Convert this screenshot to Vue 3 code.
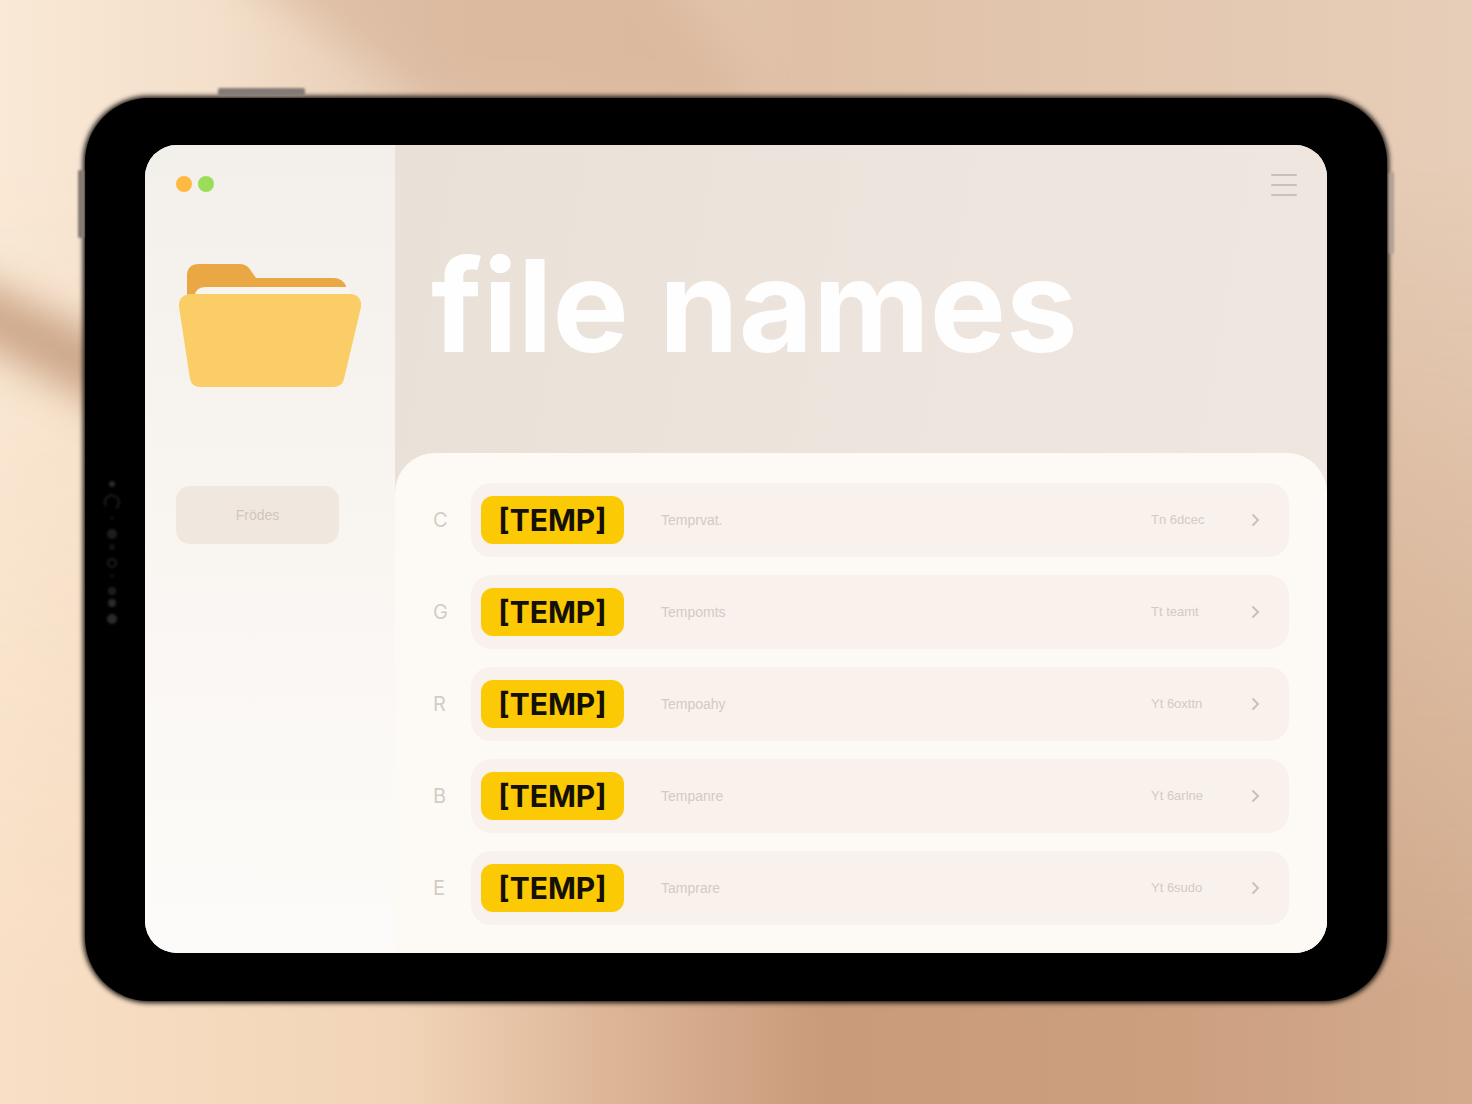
<script setup>
const files = [
  { mark: 'C', tag: '[TEMP]', name: 'Temprvat.', place: 'Tn 6dcec' },
  { mark: 'G', tag: '[TEMP]', name: 'Tempomts', place: 'Tt teamt' },
  { mark: 'R', tag: '[TEMP]', name: 'Tempoahy', place: 'Yt 6oxttn' },
  { mark: 'B', tag: '[TEMP]', name: 'Tempanre', place: 'Yt 6arlne' },
  { mark: 'E', tag: '[TEMP]', name: 'Tamprare', place: 'Yt 6sudo' },
]
</script>

<template>
  <div class="scene">
    <svg class="backdrop" viewBox="0 0 1472 1104" preserveAspectRatio="none" aria-hidden="true">
      <defs>
        <linearGradient id="wall" x1="0" y1="0" x2="1" y2="0">
          <stop offset="0" stop-color="#fae9d6" />
          <stop offset="0.15" stop-color="#f3dfca" />
          <stop offset="0.3" stop-color="#e4c8b1" />
          <stop offset="0.55" stop-color="#e0c1a8" />
          <stop offset="1" stop-color="#e7ceb8" />
        </linearGradient>
        <linearGradient id="floor" x1="0" y1="0" x2="1" y2="0">
          <stop offset="0" stop-color="#f8dfc5" />
          <stop offset="0.27" stop-color="#f2d5b8" />
          <stop offset="0.42" stop-color="#dcb496" />
          <stop offset="0.56" stop-color="#c99b7a" />
          <stop offset="0.8" stop-color="#cc9f7f" />
          <stop offset="1" stop-color="#d2ab8d" />
        </linearGradient>
        <linearGradient id="fade" x1="0" y1="0" x2="0" y2="1">
          <stop offset="0.15" stop-color="#000" />
          <stop offset="0.9" stop-color="#fff" />
        </linearGradient>
        <mask id="low"><rect width="1472" height="1104" fill="url(#fade)" /></mask>
        <filter id="soft" x="-50%" y="-50%" width="200%" height="200%">
          <feGaussianBlur stdDeviation="20" />
        </filter>
      </defs>
      <rect width="1472" height="1104" fill="url(#wall)" />
      <rect width="1472" height="1104" fill="url(#floor)" mask="url(#low)" />
      <path d="M190 -60 L440 110 L760 110 L640 -60Z" fill="#d7b397" opacity="0.6" filter="url(#soft)" />
      <path d="M-60 262 L140 355 L140 425 L-60 322Z" fill="#c09475" opacity="0.8" filter="url(#soft)" />
    </svg>

    <div class="device">
      <span class="key key-top"></span>
      <span class="key key-left"></span>
      <span class="key key-right"></span>
      <svg class="sensors" width="20" height="150" viewBox="0 0 20 150" aria-hidden="true">
        <g fill="#2a2a2a">
          <circle cx="10" cy="8" r="3" />
          <circle cx="10" cy="42" r="2" opacity="0.4" />
          <circle cx="10" cy="58" r="5" opacity="0.7" />
          <circle cx="10" cy="71" r="3" opacity="0.5" />
          <circle cx="10" cy="100" r="2" opacity="0.4" />
          <circle cx="10" cy="115" r="4" opacity="0.7" />
          <circle cx="10" cy="127" r="4" />
          <circle cx="10" cy="143" r="5" />
        </g>
        <g fill="none" stroke="#1c1c1c" stroke-width="2">
          <path d="M4 30 A7 7 0 1 1 14 32" />
          <circle cx="10" cy="87" r="4" />
        </g>
      </svg>

      <div class="screen">
        <aside class="sidebar">
          <div class="lights"><span class="light amber"></span><span class="light green"></span></div>
          <svg class="folder" width="184" height="124" viewBox="0 0 184 124" aria-hidden="true">
            <path d="M9 38 V12 Q9 0 21 0 H62 Q67 0 71 4 L78 14 H156 Q164 14 168 22 V38Z" fill="#e9a844" />
            <path d="M17 38 V31 Q18 23 28 23 H172 V38Z" fill="#f8f5f1" />
            <path d="M11 30 H173 Q184 31 183 43 L166 115 Q164 123 155 123 H22 Q14 123 12 115 L1 43 Q0 32 11 30Z" fill="#fbcd66" />
          </svg>
          <button class="folders" type="button">Frödes</button>
        </aside>

        <main class="main">
          <header class="hero">
            <button class="menu" type="button" aria-label="Menu">
              <svg width="26" height="24" viewBox="0 0 26 24" aria-hidden="true">
                <path d="M1 2 H25 M1 12 H25 M1 22 H25" stroke="#c9c1bb" stroke-width="2" stroke-linecap="round" />
              </svg>
            </button>
            <h1>file names</h1>
          </header>
          <ul class="list">
            <li v-for="file in files" :key="file.mark" class="item">
              <span class="mark">{{ file.mark }}</span>
              <button class="row" type="button">
                <span class="tag">{{ file.tag }}</span>
                <span class="name">{{ file.name }}</span>
                <span class="place">{{ file.place }}</span>
                <svg width="10" height="14" viewBox="0 0 10 14" aria-hidden="true">
                  <path d="M2 2 L7 7 L2 12" fill="none" stroke="#c9c0b9" stroke-width="2" stroke-linecap="round" />
                </svg>
              </button>
            </li>
          </ul>
        </main>
      </div>
    </div>
  </div>
</template>

<style>
body {
  margin: 0;
}
</style>

<style scoped>
* {
  box-sizing: border-box;
}

button {
  border: 0;
  padding: 0;
  background: none;
  font: inherit;
  color: inherit;
}

.scene {
  position: relative;
  min-height: 100vh;
  padding: 98px 85px;
  font-family: Inter, "Liberation Sans", sans-serif;
  background: #ecd2bb;
}

.backdrop {
  position: absolute;
  inset: 0;
  width: 100%;
  height: 100%;
}

.device {
  position: relative;
  padding: 47px 60px 48px;
  border-radius: 64px;
  background: #000;
  box-shadow: 0 0 5px 2px #1a1614;
}

.key {
  position: absolute;
  border-radius: 2px;
  background: #857b76;
  filter: blur(1px);
}

.key-top {
  top: -10px;
  left: 133px;
  width: 87px;
  height: 8px;
}

.key-left {
  top: 72px;
  left: -7px;
  width: 6px;
  height: 68px;
}

.key-right {
  top: 74px;
  right: -7px;
  width: 5px;
  height: 82px;
  background: #b3a196;
}

.sensors {
  position: absolute;
  top: 378px;
  left: 17px;
  filter: blur(1px);
}

.screen {
  display: flex;
  overflow: hidden;
  border-radius: 32px;
  background: #fdfaf6;
}

.sidebar {
  flex: 0 0 250px;
  padding: 31px 32px 31px 31px;
  background: linear-gradient(#f3f0ec, #f9f6f2 50%, #fdfbf9);
}

.lights {
  display: flex;
  gap: 6px;
}

.light {
  width: 16px;
  height: 16px;
  border-radius: 50%;
}

.amber {
  background: #feba40;
}

.green {
  background: #9bdd59;
}

.folder {
  display: block;
  margin: 72px 0 0 2px;
}

.folders {
  display: block;
  width: 163px;
  height: 58px;
  margin-top: 98px;
  border-radius: 14px;
  background: #f0e8df;
  color: #d0c6be;
  font: 14px/20px "Liberation Sans", Arial, sans-serif;
}

.main {
  flex: 1;
  min-width: 0;
  background: linear-gradient(100deg, #e9e0d8, #eee5de 60%, #efe7df);
}

.hero {
  display: flex;
  flex-direction: column;
  height: 308px;
  padding: 28px 30px 0 36px;
}

.menu {
  align-self: flex-end;
  height: 24px;
}

.menu svg {
  display: block;
}

h1 {
  margin: 29px 0 0;
  color: #fefefe;
  font-size: 128px;
  font-weight: 700;
  line-height: 160px;
  white-space: nowrap;
}

.list {
  display: flex;
  flex-direction: column;
  gap: 18px;
  margin: 0;
  padding: 30px 38px 28px;
  border-radius: 40px 40px 0 0;
  background: #fdfaf6;
  list-style: none;
}

.item {
  display: flex;
  align-items: center;
}

.mark {
  width: 38px;
  color: #d3ccc6;
  font-size: 20px;
  font-weight: 400;
}

.row {
  display: flex;
  flex: 1;
  align-items: center;
  height: 74px;
  padding: 0 28px 0 10px;
  border-radius: 20px;
  background: #f9f2ec;
  color: #d3cac3;
  font: 14px/20px "Liberation Sans", Arial, sans-serif;
  text-align: left;
}

.tag {
  width: 143px;
  border-radius: 12px;
  background: #fcca04;
  color: #141005;
  font: 700 30px/48px Inter, "Liberation Sans", sans-serif;
  text-align: center;
}

.name {
  flex: 1;
  margin-left: 37px;
}

.place {
  width: 100px;
  font-size: 13px;
}
</style>
